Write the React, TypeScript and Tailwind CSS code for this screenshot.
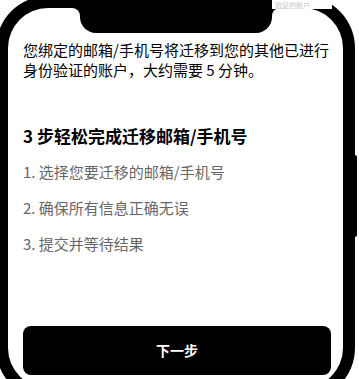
export default function App() {
  const steps = ['1. 选择您要迁移的邮箱/手机号', '2. 确保所有信息正确无误', '3. 提交并等待结果'];

  return (
    <div
      className="relative h-[379px] w-[359px] overflow-hidden bg-white"
      style={{ fontFamily: '"Noto Sans CJK SC", "Noto Sans", sans-serif' }}
    >
      {/* phone frame */}
      <div className="relative ml-[-4px] mt-[-4px] w-[359px] rounded-[52px] bg-black p-[12px]">
        <div className="absolute left-full top-[159px] h-[82px] w-[2px] rounded-r-sm bg-black" />

        <div className="relative flex h-[380px] flex-col rounded-[40px] bg-white pb-[13px] pl-[15px] pr-[12px] pt-[32px]">
          {/* notch */}
          <div className="absolute left-[72px] top-0 h-[25px] w-[192px] rounded-b-[16px] bg-black">
            <div className="absolute -left-[8px] top-0 h-[8px] w-[8px] bg-black">
              <div className="h-full w-full rounded-tr-[8px] bg-white" />
            </div>
            <div className="absolute -right-[8px] top-0 h-[8px] w-[8px] bg-black">
              <div className="h-full w-full rounded-tl-[8px] bg-white" />
            </div>
          </div>

          <p className="text-[15px] leading-[20px] text-black">
            您绑定的邮箱/手机号将迁移到您的其他已进行身份验证的账户，大约需要 5 分钟。
          </p>

          <h2 className="mt-[44px] text-[17px] font-bold leading-[24px] text-black">
            3 步轻松完成迁移邮箱/手机号
          </h2>

          <ol className="mt-[14px] flex flex-col gap-[16px]">
            {steps.map((s) => (
              <li key={s} className="text-[15px] leading-[20px] text-[#666]">
                {s}
              </li>
            ))}
          </ol>

          <button className="mt-auto flex h-[49px] w-[308px] items-center justify-center rounded-[8px] bg-black text-[14px] font-semibold text-white">
            下一步
          </button>
        </div>
      </div>

      {/* caption strip lying over the frame top */}
      <div className="absolute left-[272px] top-0 flex h-[9px] w-[60px] items-center bg-white pl-[3px] text-[7px] leading-[8px] text-[#c4c4c4]">
        验证的账户
      </div>
    </div>
  );
}
